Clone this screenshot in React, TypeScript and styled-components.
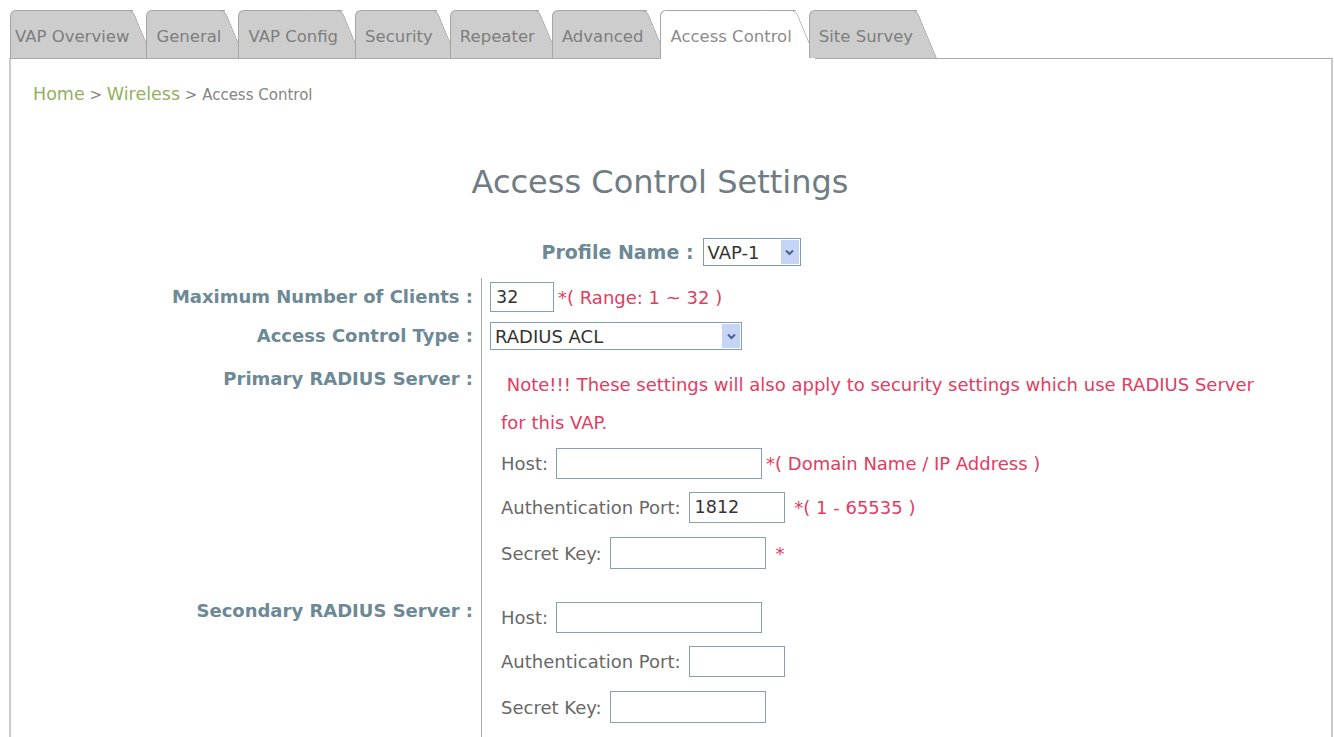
import React from "react";
import styled, { createGlobalStyle } from "styled-components";

const GlobalStyle = createGlobalStyle`
  html, body {
    margin: 0;
    padding: 0;
    background: #fff;
  }
  body {
    font-family: "DejaVu Sans", Verdana, sans-serif;
  }
`;

const tabs = [
  "VAP Overview",
  "General",
  "VAP Config",
  "Security",
  "Repeater",
  "Advanced",
  "Access Control",
  "Site Survey",
];

const RED = "#e23c62";
const LABEL = "#6c8995";

const Page = styled.div`
  width: 1334px;
  height: 737px;
  overflow: hidden;
  box-sizing: border-box;
  padding: 10px 1px 0 9px;
`;

const TabBar = styled.div`
  display: flex;
  height: 48px;
  position: relative;
  z-index: 1;
  padding-left: 1px;
`;

const Tab = styled.div<{ $active?: boolean; $first?: boolean }>`
  position: relative;
  z-index: 0;
  height: ${(p) => (p.$active ? 49 : 48)}px;
  box-sizing: border-box;
  padding: 6px 24px 0 ${(p) => (p.$first ? 5 : 10)}px;
  margin-right: -7px;
  line-height: 42px;
  font-size: 16.5px;
  color: ${(p) => (p.$active ? "#8c8c8c" : "#7e7e7e")};
  white-space: nowrap;

  &::before {
    content: "";
    position: absolute;
    z-index: -1;
    top: 0;
    bottom: 0;
    left: 0;
    right: 20px;
    background: ${(p) => (p.$active ? "#fff" : "#cdcdcd")};
    border: 1px solid #a6a6a6;
    border-right: none;
    border-bottom: none;
    border-top-left-radius: 6px;
  }

  &::after {
    content: "";
    position: absolute;
    z-index: -1;
    top: 0;
    bottom: 0;
    right: 20px;
    width: 30px;
    background: ${(p) => (p.$active ? "#fff" : "#cdcdcd")};
    border-top: 1px solid #a6a6a6;
    border-right: 1px solid #a6a6a6;
    border-top-right-radius: 6px;
    transform: skewX(22.6deg);
    transform-origin: top;
  }
`;

const Panel = styled.div`
  height: 700px;
  border-top: 1px solid #a9a9a9;
  border-left: 2px solid #cacaca;
  border-right: 2px solid #cacaca;
`;

const Crumbs = styled.div`
  padding: 25px 0 0 22px;
  height: 20px;
  line-height: 20px;
  white-space: nowrap;
`;

const CrumbLink = styled.span`
  font-size: 17.5px;
  color: #93b05c;
`;

const CrumbText = styled.span`
  font-size: 15px;
  color: #858585;
`;

const Title = styled.h1`
  margin: 58px 0 0;
  padding-right: 22px;
  font-size: 32px;
  font-weight: normal;
  line-height: 40px;
  text-align: center;
  color: #6f7c84;
`;

const ProfileRow = styled.div`
  margin-top: 35px;
  height: 30px;
  display: flex;
  align-items: center;
  justify-content: center;
  gap: 9px;
`;

const BoldLabel = styled.span`
  font-size: 19px;
  font-weight: bold;
  color: ${LABEL};
  white-space: nowrap;
`;

const FormGrid = styled.div`
  margin-top: 11px;
  display: grid;
  grid-template-columns: 470px 1fr;
`;

const LabelCell = styled.div<{ $h: number; $top?: number }>`
  box-sizing: border-box;
  padding: ${(p) => p.$top ?? 0}px 8px 0 0;
  line-height: ${(p) => p.$h}px;
  text-align: right;
  font-size: 18px;
  font-weight: bold;
  color: ${LABEL};
  white-space: nowrap;
`;

const ContentCell = styled.div<{ $top?: number; $indent?: number; $bottom?: number }>`
  border-left: 1px solid #a9a9a9;
  padding: ${(p) => p.$top ?? 0}px 0 ${(p) => p.$bottom ?? 0}px
    ${(p) => 8 + (p.$indent ?? 0)}px;
`;

const Line = styled.div<{ $h: number }>`
  height: ${(p) => p.$h}px;
  display: flex;
  align-items: center;
  white-space: nowrap;
  font-size: 18px;
  color: #686868;
`;

const Note = styled.div`
  line-height: 38px;
  font-size: 18px;
  color: ${RED};
  white-space: pre;
`;

const FieldLabel = styled.span`
  margin-right: 8px;
`;

const Hint = styled.span`
  margin-left: 4px;
  color: ${RED};
`;

const Input = styled.input<{ $w: number; $h?: number }>`
  box-sizing: border-box;
  width: ${(p) => p.$w}px;
  height: ${(p) => p.$h ?? 31}px;
  margin: 0;
  padding: 0 5px;
  border: 1px solid #8b9db0;
  background: #fff;
  font-family: "DejaVu Sans", Verdana, sans-serif;
  font-size: 17.5px;
  color: #333;
  outline: none;
`;

const Select = styled.div<{ $w: number }>`
  box-sizing: border-box;
  width: ${(p) => p.$w}px;
  height: 28px;
  display: flex;
  align-items: center;
  border: 1px solid #7f9db9;
  background: #fff;
  font-size: 18px;
  color: #333;
`;

const SelectText = styled.span`
  flex: 1;
  padding-left: 4px;
  white-space: nowrap;
`;

const Arrow = styled.span`
  width: 18px;
  align-self: stretch;
  margin: 1px;
  display: flex;
  align-items: center;
  justify-content: center;
  background: #c6d5f6;
`;

const Chevron = () => (
  <svg width="9" height="7" viewBox="0 0 9 7">
    <path d="M1 1.5 L4.5 5 L8 1.5" fill="none" stroke="#4c6090" strokeWidth="2" />
  </svg>
);

const Dropdown = ({ w, value }: { w: number; value: string }) => (
  <Select $w={w}>
    <SelectText>{value}</SelectText>
    <Arrow>
      <Chevron />
    </Arrow>
  </Select>
);

const ServerFields = ({ required }: { required?: boolean }) => (
  <>
    <Line $h={42}>
      <FieldLabel>Host:</FieldLabel>
      <Input $w={206} defaultValue="" />
      {required && <Hint>*( Domain Name / IP Address )</Hint>}
    </Line>
    <Line $h={46}>
      <FieldLabel>Authentication Port:</FieldLabel>
      <Input $w={96} defaultValue={required ? "1812" : ""} />
      {required && <Hint>&nbsp;*( 1 - 65535 )</Hint>}
    </Line>
    <Line $h={46}>
      <FieldLabel>Secret Key:</FieldLabel>
      <Input $w={156} $h={32} defaultValue="" />
      {required && <Hint>&nbsp;*</Hint>}
    </Line>
  </>
);

export default function App() {
  return (
    <>
      <GlobalStyle />
      <Page>
        <TabBar>
          {tabs.map((t, i) => (
            <Tab key={t} $first={i === 0} $active={t === "Access Control"}>
              {t}
            </Tab>
          ))}
        </TabBar>
        <Panel>
          <Crumbs>
            <CrumbLink>Home</CrumbLink>
            <CrumbText> &gt; </CrumbText>
            <CrumbLink>Wireless</CrumbLink>
            <CrumbText> &gt; Access Control</CrumbText>
          </Crumbs>

          <Title>Access Control Settings</Title>

          <ProfileRow>
            <BoldLabel>Profile Name :</BoldLabel>
            <Dropdown w={98} value="VAP-1" />
          </ProfileRow>

          <FormGrid>
            <LabelCell $h={38}>Maximum Number of Clients :</LabelCell>
            <ContentCell>
              <Line $h={38}>
                <Input $w={64} $h={30} defaultValue="32" />
                <Hint>*( Range: 1 ~ 32 )</Hint>
              </Line>
            </ContentCell>

            <LabelCell $h={40}>Access Control Type :</LabelCell>
            <ContentCell>
              <Line $h={40}>
                <Dropdown w={252} value="RADIUS ACL" />
              </Line>
            </ContentCell>

            <LabelCell $h={38} $top={4}>
              Primary RADIUS Server :
            </LabelCell>
            <ContentCell $top={10} $indent={11}>
              <Note>
                {" Note!!! These settings will also apply to security settings which use RADIUS Server"}
              </Note>
              <Note>for this VAP.</Note>
              <ServerFields required />
            </ContentCell>

            <LabelCell $h={30} $top={20}>
              Secondary RADIUS Server :
            </LabelCell>
            <ContentCell $top={20} $indent={11} $bottom={40}>
              <ServerFields />
            </ContentCell>
          </FormGrid>
        </Panel>
      </Page>
    </>
  );
}
